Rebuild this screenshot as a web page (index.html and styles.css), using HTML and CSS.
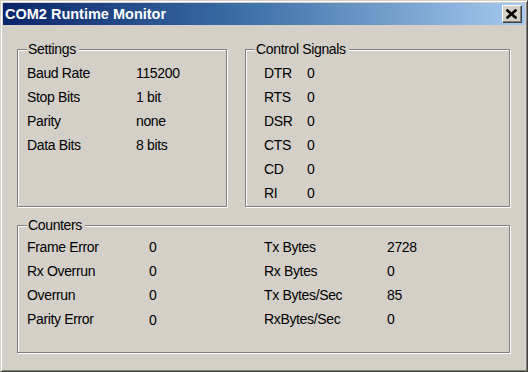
FILE: index.html
```html
<!DOCTYPE html>
<html lang="en">
<head>
<meta charset="utf-8">
<title>COM2 Runtime Monitor</title>
<link rel="stylesheet" href="styles.css">
</head>
<body>
<div class="window">
  <div class="titlebar">
    <span class="title">COM2 Runtime Monitor</span>
    <button class="close" type="button" aria-label="Close">
      <svg width="11" height="10" viewBox="0 0 11 10" aria-hidden="true">
        <path d="M1.5 1.5 L9.5 8.5 M9.5 1.5 L1.5 8.5" stroke="#000" stroke-width="2.6" stroke-linecap="square" fill="none"/>
      </svg>
    </button>
  </div>
  <div class="content">
    <div class="top-row">
      <fieldset class="group settings">
        <legend>Settings</legend>
        <div class="grid grid-settings">
          <span>Baud Rate</span><span>115200</span>
          <span>Stop Bits</span><span>1 bit</span>
          <span>Parity</span><span>none</span>
          <span>Data Bits</span><span>8 bits</span>
        </div>
      </fieldset>
      <fieldset class="group signals">
        <legend>Control Signals</legend>
        <div class="grid grid-signals">
          <span>DTR</span><span>0</span>
          <span>RTS</span><span>0</span>
          <span>DSR</span><span>0</span>
          <span>CTS</span><span>0</span>
          <span>CD</span><span>0</span>
          <span>RI</span><span>0</span>
        </div>
      </fieldset>
    </div>
    <fieldset class="group counters">
      <legend>Counters</legend>
      <div class="grid grid-counters">
        <span>Frame Error</span><span>0</span><span>Tx Bytes</span><span>2728</span>
        <span>Rx Overrun</span><span>0</span><span>Rx Bytes</span><span>0</span>
        <span>Overrun</span><span>0</span><span>Tx Bytes/Sec</span><span>85</span>
        <span>Parity Error</span><span class="low">0</span><span>RxBytes/Sec</span><span>0</span>
      </div>
    </fieldset>
  </div>
</div>
</body>
</html>
```

FILE: styles.css
```css
html, body {
  margin: 0;
  padding: 0;
  background: #d4d0c8;
}

.window {
  box-sizing: border-box;
  width: 528px;
  height: 372px;
  background: #d4d0c8;
  border: 1px solid;
  border-color: #d4d0c8 #404040 #404040 #d4d0c8;
  box-shadow: inset 1px 1px 0 #ffffff, inset -1px -1px 0 #808080;
  padding: 2px;
  display: flex;
  flex-direction: column;
  font-family: "Liberation Sans", Arial, sans-serif;
  color: #000;
}

.titlebar {
  height: 22px;
  flex: none;
  display: flex;
  align-items: center;
  justify-content: space-between;
  padding: 0 3px 0 2px;
  background: linear-gradient(to right, #0a246a 0%, #3a6ea5 45%, #a6caf0 100%);
}

.title {
  color: #fff;
  font-weight: bold;
  font-size: 14.5px;
  line-height: 22px;
  white-space: nowrap;
}

.close {
  box-sizing: border-box;
  width: 20px;
  height: 18px;
  padding: 0;
  margin: 0;
  background: #d4d0c8;
  border: 1px solid;
  border-color: #ffffff #404040 #404040 #ffffff;
  box-shadow: inset -1px -1px 0 #808080;
  display: flex;
  align-items: center;
  justify-content: center;
}

.close svg {
  display: block;
  margin: 0 1px 1px 0;
}

.content {
  flex: 1;
  display: flex;
  flex-direction: column;
  gap: 10px;
  padding: 16px 15px 16px 14px;
}

.top-row {
  display: flex;
  gap: 18px;
  height: 166px;
  flex: none;
}

.group {
  box-sizing: border-box;
  margin: 0;
  min-width: 0;
  border: 1px solid #808080;
  box-shadow: inset 1px 1px 0 #ffffff, 1px 1px 0 #ffffff;
  padding: 4px 9px 0 9px;
  font-size: 14px;
  letter-spacing: -0.35px;
}

.group legend {
  padding: 0 3px 0 1px;
  line-height: 16px;
  background: #d4d0c8;
}

.settings {
  width: 210px;
  flex: none;
}

.signals {
  flex: 1;
}

.counters {
  height: 136px;
  flex: none;
  padding-top: 2px;
}

.grid {
  display: grid;
  grid-auto-rows: 24px;
  line-height: 24px;
  white-space: nowrap;
}

.grid-settings {
  grid-template-columns: 109px auto;
}

.grid-signals {
  margin-left: 9px;
  grid-template-columns: 43px auto;
}

.grid-counters {
  grid-template-columns: 122px 115px 123px auto;
}

.low {
  position: relative;
  top: 1px;
}
```
